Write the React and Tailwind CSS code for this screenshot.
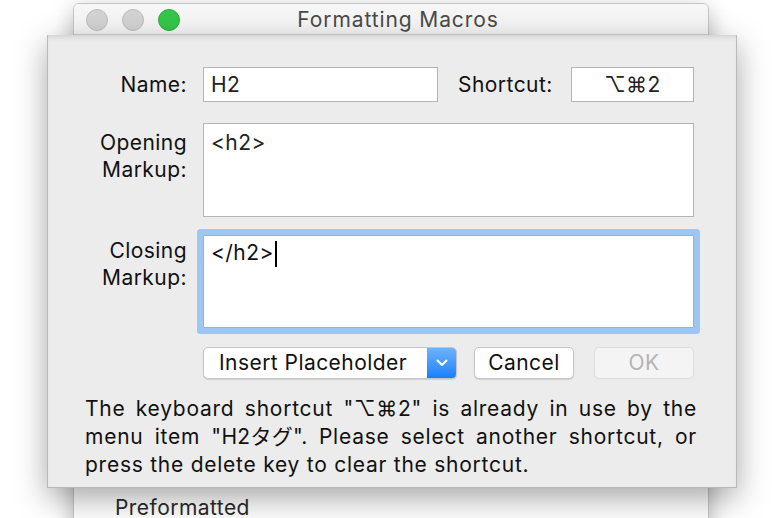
export default function App() {
  return (
    <div className="relative h-[518px] w-[772px] overflow-hidden bg-white font-['Inter','Noto_Sans_CJK_JP','DejaVu_Sans',sans-serif] text-[21px] tracking-[0.45px] text-[#111]">
      {/* window behind the sheet */}
      <div className="ml-[73px] mt-[3px] h-[600px] w-[636px] overflow-hidden rounded-t-[6px] border border-[#c6c6c6] bg-white shadow-[0_6px_22px_rgba(0,0,0,0.28)]">
        <div className="grid h-[31px] grid-cols-[1fr_auto_1fr] items-center border-b border-[#d2d2d2] bg-[#f6f6f6]">
          <div className="flex items-center gap-[14px] pl-[12px]">
            <span className="h-[22px] w-[22px] rounded-full border border-[#bdbdbd] bg-[#d3d3d3]" />
            <span className="h-[22px] w-[22px] rounded-full border border-[#bdbdbd] bg-[#d3d3d3]" />
            <span className="h-[22px] w-[22px] rounded-full border border-[#2ea93f] bg-[#34c749]" />
          </div>
          <div className="pl-[14px] leading-[31px] tracking-[0.9px] text-[#4a4a4a]">Formatting Macros</div>
          <div />
        </div>
        <div className="pl-[41px] pt-[459px] leading-[28px] text-[#2a2a2a]">Preformatted</div>
      </div>

      {/* sheet */}
      <div className="absolute left-[47px] top-[35px] h-[453px] w-[690px] border-x border-b border-[#b9b9b9] bg-[#ececec] pt-[32px] shadow-[0_10px_30px_rgba(0,0,0,0.35),inset_0_5px_5px_-3px_rgba(0,0,0,0.12)]">
        {/* name + shortcut */}
        <div className="grid grid-cols-[139px_491px] items-center gap-x-[16px]">
          <div className="text-right leading-[35px]">Name:</div>
          <div className="flex items-center">
            <div className="h-[35px] w-[235px] border border-[#b4b4b4] bg-white pl-[7px] leading-[33px] text-[#222]">H2</div>
            <span className="ml-[20px] leading-[35px]">Shortcut:</span>
            <div className="ml-auto h-[35px] w-[123px] border border-[#b4b4b4] bg-white text-center leading-[33px] text-[#222]">⌥⌘2</div>
          </div>
        </div>

        {/* opening markup */}
        <div className="mt-[21px] grid grid-cols-[139px_491px] gap-x-[16px]">
          <div className="pt-[6px] text-right leading-[27px]">
            Opening
            <br />
            Markup:
          </div>
          <div className="h-[94px] border border-[#b4b4b4] bg-white pl-[7px] pt-[5px] leading-[28px] text-[#222]">&lt;h2&gt;</div>
        </div>

        {/* closing markup, focused */}
        <div className="mt-[18px] grid grid-cols-[139px_491px] gap-x-[16px]">
          <div className="pt-[2px] text-right leading-[27px]">
            Closing
            <br />
            Markup:
          </div>
          <div className="h-[93px] rounded-[1px] border border-[#86b5ea] bg-white pl-[7px] pt-[3px] leading-[28px] text-[#111] shadow-[0_0_0_6px_#9dc6f2]">
            &lt;/h2&gt;
            <span className="ml-[1px] inline-block h-[26px] w-[2px] bg-black align-middle" />
          </div>
        </div>

        {/* buttons */}
        <div className="mt-[19px] grid grid-cols-[139px_491px] gap-x-[16px]">
          <div />
          <div className="flex items-center">
            <div className="flex h-[32px] w-[254px] overflow-hidden rounded-[5px] border border-[#c4c4c4] bg-white shadow-[0_1px_1px_rgba(0,0,0,0.12)]">
              <div className="flex-1 pl-[15px] leading-[30px]">Insert Placeholder</div>
              <div className="flex w-[29px] items-center justify-center bg-gradient-to-b from-[#6cb3fd] to-[#157ffb]">
                <svg width="12" height="8" viewBox="0 0 12 8">
                  <polyline points="1.5,1.5 6,6 10.5,1.5" fill="none" stroke="white" strokeWidth="2" strokeLinecap="round" strokeLinejoin="round" />
                </svg>
              </div>
            </div>
            <div className="ml-[17px] h-[32px] w-[100px] rounded-[5px] border border-[#c4c4c4] bg-white text-center leading-[30px] shadow-[0_1px_1px_rgba(0,0,0,0.12)]">Cancel</div>
            <div className="ml-auto h-[32px] w-[100px] rounded-[5px] border border-[#dcdcdc] bg-[#f4f4f4] text-center leading-[30px] text-[#b4b4b4]">OK</div>
          </div>
        </div>

        {/* message */}
        <div className="mt-[16px] pl-[37px] pr-[39px] leading-[28px] tracking-[0.75px] text-[#111]">
          <div className="text-justify [text-align-last:justify]">The keyboard shortcut "⌥⌘2" is already in use by the</div>
          <div className="text-justify [text-align-last:justify]">
            menu item <span className="inline-block tracking-[0.3px]">"H2タグ".</span> Please select another shortcut, or
          </div>
          <div>press the delete key to clear the shortcut.</div>
        </div>
      </div>
    </div>
  );
}
